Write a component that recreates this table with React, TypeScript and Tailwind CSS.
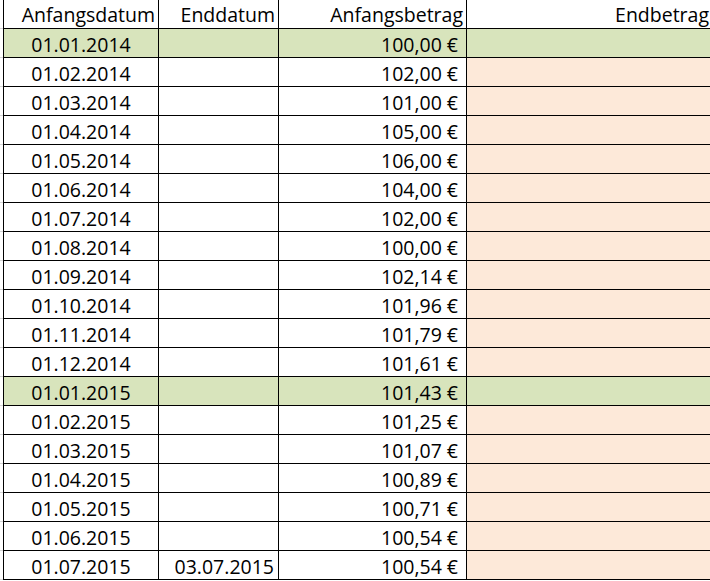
import React from "react";

type Row = { start: string; end?: string; amount: string; green?: boolean };

const rows: Row[] = [
  { start: "01.01.2014", amount: "100,00 €", green: true },
  { start: "01.02.2014", amount: "102,00 €" },
  { start: "01.03.2014", amount: "101,00 €" },
  { start: "01.04.2014", amount: "105,00 €" },
  { start: "01.05.2014", amount: "106,00 €" },
  { start: "01.06.2014", amount: "104,00 €" },
  { start: "01.07.2014", amount: "102,00 €" },
  { start: "01.08.2014", amount: "100,00 €" },
  { start: "01.09.2014", amount: "102,14 €" },
  { start: "01.10.2014", amount: "101,96 €" },
  { start: "01.11.2014", amount: "101,79 €" },
  { start: "01.12.2014", amount: "101,61 €" },
  { start: "01.01.2015", amount: "101,43 €", green: true },
  { start: "01.02.2015", amount: "101,25 €" },
  { start: "01.03.2015", amount: "101,07 €" },
  { start: "01.04.2015", amount: "100,89 €" },
  { start: "01.05.2015", amount: "100,71 €" },
  { start: "01.06.2015", amount: "100,54 €" },
  { start: "01.07.2015", end: "03.07.2015", amount: "100,54 €" },
];

export default function App() {
  return (
    <div
      className="w-[710px] h-[581px] overflow-hidden bg-white text-black text-[19.5px] leading-none"
      style={{ fontFamily: '"Open Sans", "Noto Sans", sans-serif' }}
    >
      {/* header */}
      <div className="flex h-[29px]">
        <div className="w-[3px] border-b border-[#d4d4d4]" />
        <div className="flex flex-1 border-b border-l border-black">
          <div className="w-[155px] border-r border-black flex items-end justify-end pr-[3px] pb-[4px]">
            Anfangsdatum
          </div>
          <div className="w-[120px] border-r border-black flex items-end justify-end pr-[3px] pb-[4px]">
            Enddatum
          </div>
          <div className="w-[188px] border-r border-black flex items-end justify-end pr-[3px] pb-[4px]">
            Anfangsbetrag
          </div>
          <div className="flex-1 flex items-end justify-end pr-[1px] pb-[4px]">Endbetrag</div>
        </div>
      </div>
      {rows.map((r, i) => (
        <div key={i} className="flex h-[29px]">
          <div className="w-[3px] border-b border-[#d4d4d4]" />
          <div
            className={
              "flex flex-1 border-b border-l border-black " + (r.green ? "bg-[#d8e4bc]" : "")
            }
          >
            <div className="w-[155px] border-r border-black flex items-end justify-center pb-[3px]">
              {r.start}
            </div>
            <div className="w-[120px] border-r border-black flex items-end justify-end pr-[4px] pb-[3px]">
              {r.end ?? ""}
            </div>
            <div className="w-[188px] border-r border-black flex items-end justify-end pr-[8px] pb-[3px]">
              {r.amount}
            </div>
            <div className={"flex-1 " + (r.green ? "" : "bg-[#fde9d9]")} />
          </div>
        </div>
      ))}
    </div>
  );
}
